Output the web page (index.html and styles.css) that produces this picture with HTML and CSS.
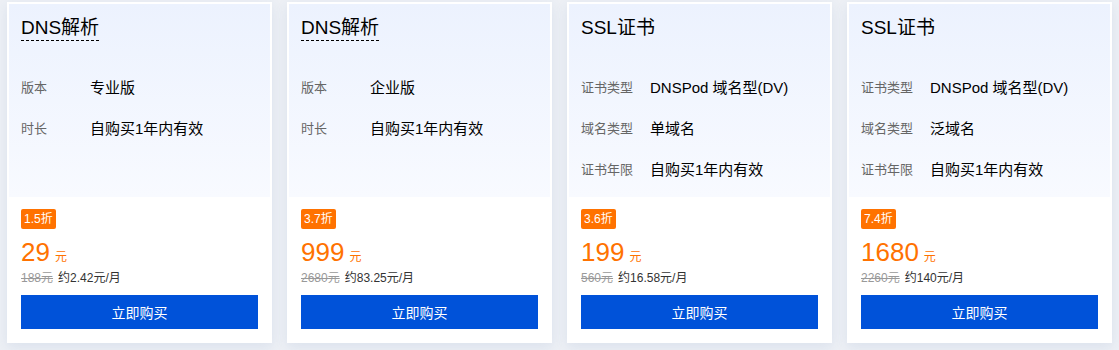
FILE: index.html
```html
<!DOCTYPE html>
<html lang="zh-CN">
<head>
    <meta charset="UTF-8">
    <title>特惠产品</title>
    <link rel="stylesheet" href="styles.css">
</head>
<body>
    <div class="card-list">
        <div class="card">
            <div class="card-top">
                <div class="card-title"><span class="dotted">DNS解析</span></div>
                <div class="spec-list">
                    <div class="spec"><span class="spec-label">版本</span><span class="spec-value">专业版</span></div>
                    <div class="spec"><span class="spec-label">时长</span><span class="spec-value">自购买1年内有效</span></div>
                </div>
            </div>
            <div class="card-bottom">
                <div class="discount"><span class="badge">1.5折</span></div>
                <div class="price">29<span class="unit">元</span></div>
                <div class="price-sub"><s class="origin">188元</s>约2.42元/月</div>
                <button type="button" class="buy-button">立即购买</button>
            </div>
        </div>
        <div class="card">
            <div class="card-top">
                <div class="card-title"><span class="dotted">DNS解析</span></div>
                <div class="spec-list">
                    <div class="spec"><span class="spec-label">版本</span><span class="spec-value">企业版</span></div>
                    <div class="spec"><span class="spec-label">时长</span><span class="spec-value">自购买1年内有效</span></div>
                </div>
            </div>
            <div class="card-bottom">
                <div class="discount"><span class="badge">3.7折</span></div>
                <div class="price">999<span class="unit">元</span></div>
                <div class="price-sub"><s class="origin">2680元</s>约83.25元/月</div>
                <button type="button" class="buy-button">立即购买</button>
            </div>
        </div>
        <div class="card">
            <div class="card-top">
                <div class="card-title"><span>SSL证书</span></div>
                <div class="spec-list">
                    <div class="spec"><span class="spec-label">证书类型</span><span class="spec-value">DNSPod 域名型(DV)</span></div>
                    <div class="spec"><span class="spec-label">域名类型</span><span class="spec-value">单域名</span></div>
                    <div class="spec"><span class="spec-label">证书年限</span><span class="spec-value">自购买1年内有效</span></div>
                </div>
            </div>
            <div class="card-bottom">
                <div class="discount"><span class="badge">3.6折</span></div>
                <div class="price">199<span class="unit">元</span></div>
                <div class="price-sub"><s class="origin">560元</s>约16.58元/月</div>
                <button type="button" class="buy-button">立即购买</button>
            </div>
        </div>
        <div class="card">
            <div class="card-top">
                <div class="card-title"><span>SSL证书</span></div>
                <div class="spec-list">
                    <div class="spec"><span class="spec-label">证书类型</span><span class="spec-value">DNSPod 域名型(DV)</span></div>
                    <div class="spec"><span class="spec-label">域名类型</span><span class="spec-value">泛域名</span></div>
                    <div class="spec"><span class="spec-label">证书年限</span><span class="spec-value">自购买1年内有效</span></div>
                </div>
            </div>
            <div class="card-bottom">
                <div class="discount"><span class="badge">7.4折</span></div>
                <div class="price">1680<span class="unit">元</span></div>
                <div class="price-sub"><s class="origin">2260元</s>约140元/月</div>
                <button type="button" class="buy-button">立即购买</button>
            </div>
        </div>
    </div>
</body>
</html>
```

FILE: styles.css
```css
body {
    margin: 0;
    background-color: #edf0f5;
    font-family: "Liberation Sans", "Noto Sans CJK SC", sans-serif;
    color: #000;
}
.card-list {
    display: grid;
    grid-template-columns: repeat(4, 265px);
    gap: 15px;
    padding: 2px 7px 7px;
}
.card {
    border: 2px solid #fff;
    background-color: #fff;
    box-shadow: 0 4px 12px rgba(55, 99, 170, 0.1);
}
.card-top {
    height: 193px;
    box-sizing: border-box;
    padding: 10px 12px 0;
    background: linear-gradient(180deg, #ecf2fe 0%, #f8faff 100%);
}
.card-title {
    display: flex;
    align-items: center;
    height: 28px;
    font-size: 19px;
}
.card-title span {
    line-height: 24px;
}
.card-title .dotted {
    border-bottom: 1px dashed #000;
}
.spec-list {
    display: flex;
    flex-direction: column;
    gap: 21px;
    margin-top: 34px;
}
.spec {
    display: grid;
    grid-template-columns: 69px 1fr;
    align-items: center;
    height: 20px;
}
.spec-label {
    font-size: 13px;
    color: #666;
}
.spec-value {
    font-size: 15px;
    color: #000;
}
.card-bottom {
    padding: 12px 12px 12px;
}
.discount {
    display: flex;
}
.badge {
    height: 20px;
    line-height: 20px;
    padding: 0 3px;
    border-radius: 2px;
    background-color: #ff7200;
    color: #fff;
    font-size: 12px;
}
.price {
    margin-top: 7px;
    height: 33px;
    line-height: 33px;
    font-size: 26px;
    color: #ff7200;
}
.price .unit {
    margin-left: 5px;
    font-size: 12px;
    line-height: 1;
}
.price-sub {
    line-height: 18px;
    font-size: 12px;
    color: #333;
}
.price-sub .origin {
    margin-right: 5px;
    color: #999;
}
.buy-button {
    display: block;
    width: 100%;
    height: 34px;
    margin-top: 8px;
    border: none;
    background-color: #0052d9;
    color: #fff;
    font-family: inherit;
    font-size: 14px;
    cursor: pointer;
}
```
